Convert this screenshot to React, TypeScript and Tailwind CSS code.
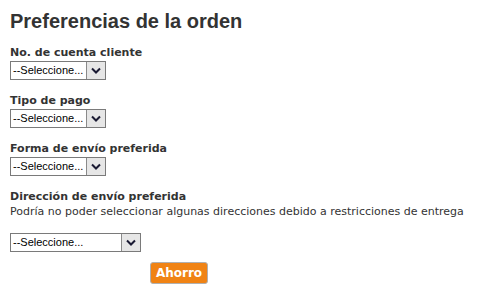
import React from 'react'

const verdana = { fontFamily: 'Verdana, "DejaVu Sans", sans-serif' }

function FakeSelect({ width }: { width: string }) {
  return (
    <div className={`flex h-[19px] ${width} border border-[#7a7a7a] bg-white`}>
      <span className="flex-1 pl-[2px] text-[11px] leading-[17px] text-black font-['Liberation_Sans',Arial,sans-serif] whitespace-nowrap">
        --Seleccione...
      </span>
      <span className="flex w-[19px] items-center justify-center border-l border-[#8a8a8a] bg-[#e6e6e6]">
        <svg width="10" height="7" viewBox="0 0 10 7" fill="none">
          <path d="M1 1.5l4 4 4-4" stroke="#1a1a33" strokeWidth="2" />
        </svg>
      </span>
    </div>
  )
}

function Field({ label, children }: { label: string; children: React.ReactNode }) {
  return (
    <div className="flex flex-col">
      <div className="text-[11px] font-bold leading-[12px] text-[#333]" style={verdana}>
        {label}
      </div>
      <div className="mt-[2px]">{children}</div>
    </div>
  )
}

export default function App() {
  return (
    <div className="min-h-[288px] w-[479px] bg-white pl-[10px] pt-[9px]">
      <h1 className="text-[20px] font-bold leading-[24px] text-[#333] font-['Liberation_Sans',Arial,sans-serif]">
        Preferencias de la orden
      </h1>
      <div className="mt-[14px] flex flex-col gap-[15px]">
        <Field label="No. de cuenta cliente">
          <FakeSelect width="w-[96px]" />
        </Field>
        <Field label="Tipo de pago">
          <FakeSelect width="w-[96px]" />
        </Field>
        <Field label="Forma de envío preferida">
          <FakeSelect width="w-[96px]" />
        </Field>
        <div className="flex flex-col">
          <div className="text-[11px] font-bold leading-[12px] text-[#333]" style={verdana}>
            Dirección de envío preferida
          </div>
          <div className="mt-[3px] text-[11px] leading-[12px] text-[#333]" style={verdana}>
            Podría no poder seleccionar algunas direcciones debido a restricciones de entrega
          </div>
          <div className="mt-[15px]">
            <FakeSelect width="w-[131px]" />
          </div>
          <div className="mt-[7px] pl-[140px]">
            <button
              className="h-[22px] w-[58px] rounded-[3px] border border-[#b0b0b0] bg-[#f08314] text-[12px] font-bold text-white"
              style={verdana}
            >
              Ahorro
            </button>
          </div>
        </div>
      </div>
    </div>
  )
}
